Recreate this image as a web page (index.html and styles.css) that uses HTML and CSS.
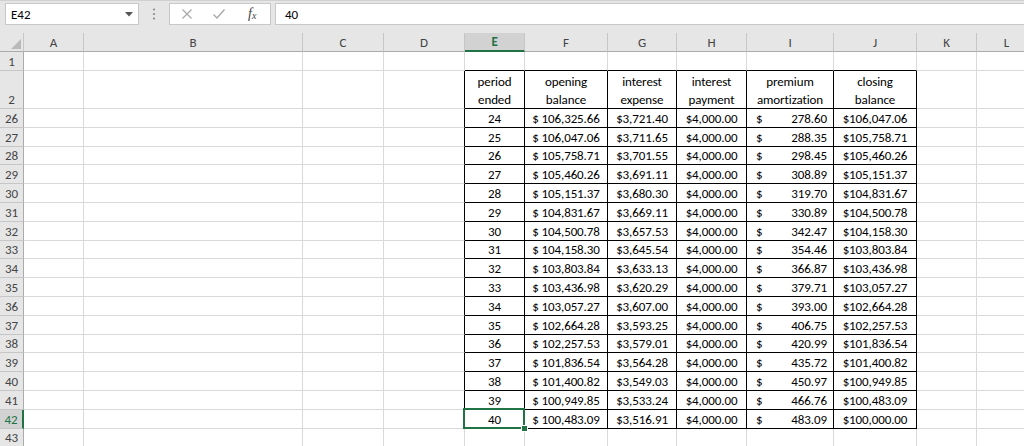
FILE: index.html
```html
<!DOCTYPE html>
<html>
<head>
<meta charset="utf-8">
<link rel="stylesheet" href="styles.css">
</head>
<body>
<div class="topbar">
  <div class="namebox"><span>E42</span><svg class="dd" width="8" height="5" viewBox="0 0 8 5"><path d="M0 0H8L4 4.5Z" fill="#555"/></svg></div>
  <div class="dots"><svg width="4" height="12" viewBox="0 0 4 12"><circle cx="2" cy="1.5" r="1.1" fill="#8a8a8a"/><circle cx="2" cy="6" r="1.1" fill="#8a8a8a"/><circle cx="2" cy="10.5" r="1.1" fill="#8a8a8a"/></svg></div>
  <div class="fbtns">
    <svg width="12" height="12" viewBox="0 0 12 12"><path d="M1.5 1.5L10.5 10.5M10.5 1.5L1.5 10.5" stroke="#a6a6a6" stroke-width="1.2" fill="none"/></svg>
    <svg width="14" height="12" viewBox="0 0 14 12"><path d="M1.5 6.5L5 10L12.5 1.5" stroke="#a6a6a6" stroke-width="1.3" fill="none"/></svg>
    <span class="fx">f<sub>x</sub></span>
  </div>
  <div class="formula">40</div>
</div>
<div class="sheet">
  <div class="row hdr"><div class="corner"><svg width="10" height="10" viewBox="0 0 10 10"><path d="M10 0V10H0Z" fill="#b9b9b9"/></svg></div><div>A</div><div>B</div><div>C</div><div>D</div><div class="selh">E</div><div>F</div><div>G</div><div>H</div><div>I</div><div>J</div><div>K</div><div>L</div></div>
  <div class="row r1"><div class="rh">1</div><div></div><div></div><div></div><div></div><div class="bb"></div><div class="bb"></div><div class="bb"></div><div class="bb"></div><div class="bb"></div><div class="bb"></div><div></div><div></div></div>
  <div class="row r2"><div class="rh bot">2</div><div></div><div></div><div></div><div class="tl"></div><div class="t hd">period<br>ended</div><div class="t hd">opening<br>balance</div><div class="t hd">interest<br>expense</div><div class="t hd">interest<br>payment</div><div class="t hd">premium<br>amortization</div><div class="t hd">closing<br>balance</div><div></div><div></div></div>
  <div class="row"><div class="rh">26</div><div></div><div></div><div></div><div class="tl"></div><div class="t c">24</div><div class="t c">$ 106,325.66</div><div class="t c">$3,721.40</div><div class="t c">$4,000.00</div><div class="t acct"><span>$</span><span>278.60</span></div><div class="t c">$106,047.06</div><div></div><div></div></div>
  <div class="row"><div class="rh">27</div><div></div><div></div><div></div><div class="tl"></div><div class="t c">25</div><div class="t c">$ 106,047.06</div><div class="t c">$3,711.65</div><div class="t c">$4,000.00</div><div class="t acct"><span>$</span><span>288.35</span></div><div class="t c">$105,758.71</div><div></div><div></div></div>
  <div class="row"><div class="rh">28</div><div></div><div></div><div></div><div class="tl"></div><div class="t c">26</div><div class="t c">$ 105,758.71</div><div class="t c">$3,701.55</div><div class="t c">$4,000.00</div><div class="t acct"><span>$</span><span>298.45</span></div><div class="t c">$105,460.26</div><div></div><div></div></div>
  <div class="row"><div class="rh">29</div><div></div><div></div><div></div><div class="tl"></div><div class="t c">27</div><div class="t c">$ 105,460.26</div><div class="t c">$3,691.11</div><div class="t c">$4,000.00</div><div class="t acct"><span>$</span><span>308.89</span></div><div class="t c">$105,151.37</div><div></div><div></div></div>
  <div class="row"><div class="rh">30</div><div></div><div></div><div></div><div class="tl"></div><div class="t c">28</div><div class="t c">$ 105,151.37</div><div class="t c">$3,680.30</div><div class="t c">$4,000.00</div><div class="t acct"><span>$</span><span>319.70</span></div><div class="t c">$104,831.67</div><div></div><div></div></div>
  <div class="row"><div class="rh">31</div><div></div><div></div><div></div><div class="tl"></div><div class="t c">29</div><div class="t c">$ 104,831.67</div><div class="t c">$3,669.11</div><div class="t c">$4,000.00</div><div class="t acct"><span>$</span><span>330.89</span></div><div class="t c">$104,500.78</div><div></div><div></div></div>
  <div class="row"><div class="rh">32</div><div></div><div></div><div></div><div class="tl"></div><div class="t c">30</div><div class="t c">$ 104,500.78</div><div class="t c">$3,657.53</div><div class="t c">$4,000.00</div><div class="t acct"><span>$</span><span>342.47</span></div><div class="t c">$104,158.30</div><div></div><div></div></div>
  <div class="row"><div class="rh">33</div><div></div><div></div><div></div><div class="tl"></div><div class="t c">31</div><div class="t c">$ 104,158.30</div><div class="t c">$3,645.54</div><div class="t c">$4,000.00</div><div class="t acct"><span>$</span><span>354.46</span></div><div class="t c">$103,803.84</div><div></div><div></div></div>
  <div class="row"><div class="rh">34</div><div></div><div></div><div></div><div class="tl"></div><div class="t c">32</div><div class="t c">$ 103,803.84</div><div class="t c">$3,633.13</div><div class="t c">$4,000.00</div><div class="t acct"><span>$</span><span>366.87</span></div><div class="t c">$103,436.98</div><div></div><div></div></div>
  <div class="row"><div class="rh">35</div><div></div><div></div><div></div><div class="tl"></div><div class="t c">33</div><div class="t c">$ 103,436.98</div><div class="t c">$3,620.29</div><div class="t c">$4,000.00</div><div class="t acct"><span>$</span><span>379.71</span></div><div class="t c">$103,057.27</div><div></div><div></div></div>
  <div class="row"><div class="rh">36</div><div></div><div></div><div></div><div class="tl"></div><div class="t c">34</div><div class="t c">$ 103,057.27</div><div class="t c">$3,607.00</div><div class="t c">$4,000.00</div><div class="t acct"><span>$</span><span>393.00</span></div><div class="t c">$102,664.28</div><div></div><div></div></div>
  <div class="row"><div class="rh">37</div><div></div><div></div><div></div><div class="tl"></div><div class="t c">35</div><div class="t c">$ 102,664.28</div><div class="t c">$3,593.25</div><div class="t c">$4,000.00</div><div class="t acct"><span>$</span><span>406.75</span></div><div class="t c">$102,257.53</div><div></div><div></div></div>
  <div class="row"><div class="rh">38</div><div></div><div></div><div></div><div class="tl"></div><div class="t c">36</div><div class="t c">$ 102,257.53</div><div class="t c">$3,579.01</div><div class="t c">$4,000.00</div><div class="t acct"><span>$</span><span>420.99</span></div><div class="t c">$101,836.54</div><div></div><div></div></div>
  <div class="row"><div class="rh">39</div><div></div><div></div><div></div><div class="tl"></div><div class="t c">37</div><div class="t c">$ 101,836.54</div><div class="t c">$3,564.28</div><div class="t c">$4,000.00</div><div class="t acct"><span>$</span><span>435.72</span></div><div class="t c">$101,400.82</div><div></div><div></div></div>
  <div class="row"><div class="rh">40</div><div></div><div></div><div></div><div class="tl"></div><div class="t c">38</div><div class="t c">$ 101,400.82</div><div class="t c">$3,549.03</div><div class="t c">$4,000.00</div><div class="t acct"><span>$</span><span>450.97</span></div><div class="t c">$100,949.85</div><div></div><div></div></div>
  <div class="row"><div class="rh">41</div><div></div><div></div><div></div><div class="tl"></div><div class="t c">39</div><div class="t c">$ 100,949.85</div><div class="t c">$3,533.24</div><div class="t c">$4,000.00</div><div class="t acct"><span>$</span><span>466.76</span></div><div class="t c">$100,483.09</div><div></div><div></div></div>
  <div class="row"><div class="rh selr">42</div><div></div><div></div><div></div><div class="tl"></div><div class="t c sel">40</div><div class="t c">$ 100,483.09</div><div class="t c">$3,516.91</div><div class="t c">$4,000.00</div><div class="t acct"><span>$</span><span>483.09</span></div><div class="t c">$100,000.00</div><div></div><div></div></div>
  <div class="row"><div class="rh">43</div><div></div><div></div><div></div><div></div><div></div><div></div><div></div><div></div><div></div><div></div><div></div><div></div></div>
</div>
</body>
</html>
```
FILE: styles.css
```css
html, body {
  margin: 0;
  padding: 0;
  background: #ffffff;
  overflow: hidden;
  width: 1024px;
  height: 446px;
}
body {
  font-family: Carlito, Calibri, Lato, "Liberation Sans", sans-serif;
  color: #000;
}
.topbar {
  display: flex;
  align-items: flex-start;
  height: 33px;
  box-sizing: border-box;
  padding: 2px 0 0 5px;
  background: #e6e6e6;
  border-top: 1px solid #d0d0d0;
}
.namebox {
  width: 134px;
  height: 22px;
  box-sizing: border-box;
  background: #fff;
  border: 1px solid #c8c8c8;
  display: flex;
  align-items: center;
  justify-content: space-between;
  padding: 0 5px 0 5px;
  font-size: 13px;
}
.dd { margin-top: 1px; }
.dots {
  width: 30px;
  height: 22px;
  display: flex;
  align-items: center;
  justify-content: center;
}
.fbtns {
  width: 102px;
  height: 22px;
  box-sizing: border-box;
  background: #fff;
  border: 1px solid #c8c8c8;
  display: flex;
  align-items: center;
  padding: 0 0 0 11px;
  gap: 19px;
}
.fx {
  font-family: "Liberation Serif", serif;
  font-style: italic;
  font-size: 14px;
  color: #444;
  margin-left: 3px;
}
.fx sub { font-size: 10px; vertical-align: -1px; }
.formula {
  flex: 1;
  margin-left: 4px;
  height: 22px;
  box-sizing: border-box;
  background: #fff;
  border: 1px solid #c8c8c8;
  border-right: none;
  display: flex;
  align-items: center;
  padding-left: 9px;
  font-size: 13px;
}
.sheet {
  font-size: 13px;
  letter-spacing: -0.1px;
}
.row {
  display: grid;
  grid-template-columns: 24px 60px 219px 81px 81px 60px 83px 69px 70px 87px 83px 60px 60px;
  height: 18.8px;
}
.row > div {
  box-sizing: border-box;
  border-right: 1px solid #d9d9d9;
  border-bottom: 1px solid #d9d9d9;
  overflow: hidden;
  white-space: nowrap;
  display: flex;
  align-items: center;
  justify-content: center;
  position: relative;
  padding-top: 1px;
}
.r1, .hdr { height: 19px; }
.r2 { height: 38px; }
.hdr > div {
  background: #e6e6e6;
  border-right: 1px solid #c6c6c6;
  border-bottom: 1px solid #ababab;
  color: #444;
  font-size: 13px;
  padding-top: 0;
}
.hdr > .corner {
  justify-content: flex-end;
  align-items: flex-end;
  padding: 0 2px 2px 0;
}
.hdr > .selh {
  background: #d2d2d2;
  color: #217346;
  font-weight: bold;
  border-bottom: 2px solid #217346;
}
.row > .rh {
  background: #e6e6e6;
  border-right: 1px solid #ababab;
  border-bottom: 1px solid #c6c6c6;
  color: #444;
  font-size: 13px;
  letter-spacing: 0;
}
.row > .rh.bot {
  align-items: flex-end;
  padding-bottom: 1px;
}
.row > .rh.selr {
  background: #d2d2d2;
  color: #217346;
  border-right: 2px solid #217346;
}
.row > .tl { border-right: 1px solid #000; }
.row > .bb { border-bottom: 1px solid #000; }
.row > .t {
  border-right: 1px solid #000;
  border-bottom: 1px solid #000;
}
.row > .hd {
  display: block;
  text-align: center;
  line-height: 18px;
  padding-top: 2px;
}
.row > .acct {
  justify-content: space-between;
  padding: 1px 6px 0 9px;
}
.row > .sel { overflow: visible; }
.sel::after {
  content: "";
  position: absolute;
  left: -2px;
  top: -2px;
  right: -1px;
  bottom: -1px;
  border: 2px solid #217346;
  pointer-events: none;
}
.sel::before {
  content: "";
  position: absolute;
  right: -4px;
  bottom: -4px;
  width: 5px;
  height: 5px;
  background: #217346;
  border: 1px solid #fff;
  z-index: 2;
}
```
